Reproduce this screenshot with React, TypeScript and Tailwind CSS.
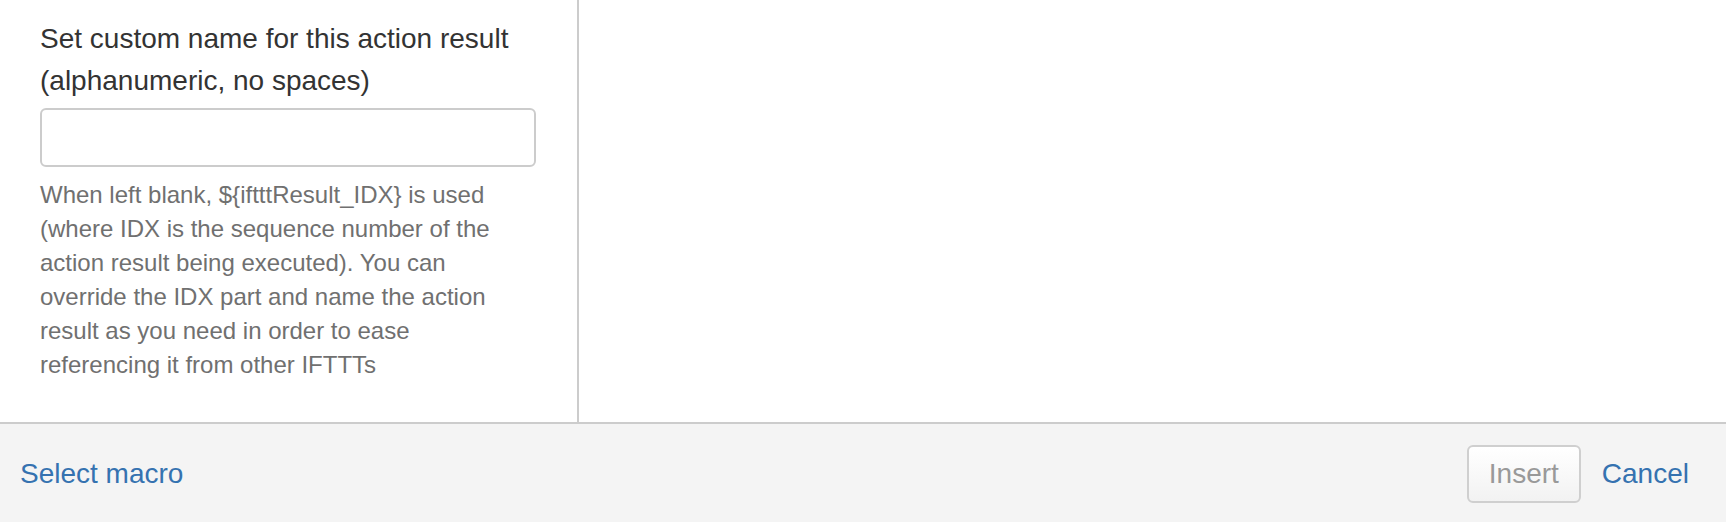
export default function App() {
  const font = { fontFamily: '"Liberation Sans", Arial, sans-serif' };
  return (
    <div className="w-[1726px] h-[522px] flex flex-col bg-white overflow-hidden" style={font}>
      <div className="flex flex-1 min-h-0">
        <div className="w-[579px] shrink-0 border-r-2 border-[#cccccc] pl-[40px] pr-[40px] pt-[18px]">
          <label className="block text-[28px] leading-[42px] text-[#333333]">
            Set custom name for this action result (alphanumeric, no spaces)
          </label>
          <input
            type="text"
            className="block mt-[6px] w-[496px] h-[59px] border-2 border-[#cccccc] rounded-[6px] bg-white outline-none"
          />
          <p className="mt-[11px] text-[24px] leading-[34px] text-[#707070] w-[470px]">
            When left blank, ${'{'}iftttResult_IDX{'}'} is used (where IDX is the sequence number of the
            action result being executed). You can override the IDX part and name the action result as
            you need in order to ease referencing it from other IFTTTs
          </p>
        </div>
        <div className="flex-1" />
      </div>
      <div className="h-[100px] shrink-0 border-t-2 border-[#cccccc] bg-[#f4f4f4] flex items-center justify-between pl-[20px] pr-[37px] pt-[2px]">
        <a className="text-[28px] text-[#3572b0] cursor-pointer">Select macro</a>
        <div className="flex items-center gap-[21px]">
          <button
            disabled
            className="w-[114px] h-[58px] border-2 border-[#cfcfcf] rounded-[6px] bg-gradient-to-b from-[#ffffff] to-[#f2f2f2] text-[28px] text-[#999999]"
          >
            Insert
          </button>
          <a className="text-[28px] text-[#3572b0] cursor-pointer">Cancel</a>
        </div>
      </div>
    </div>
  );
}
